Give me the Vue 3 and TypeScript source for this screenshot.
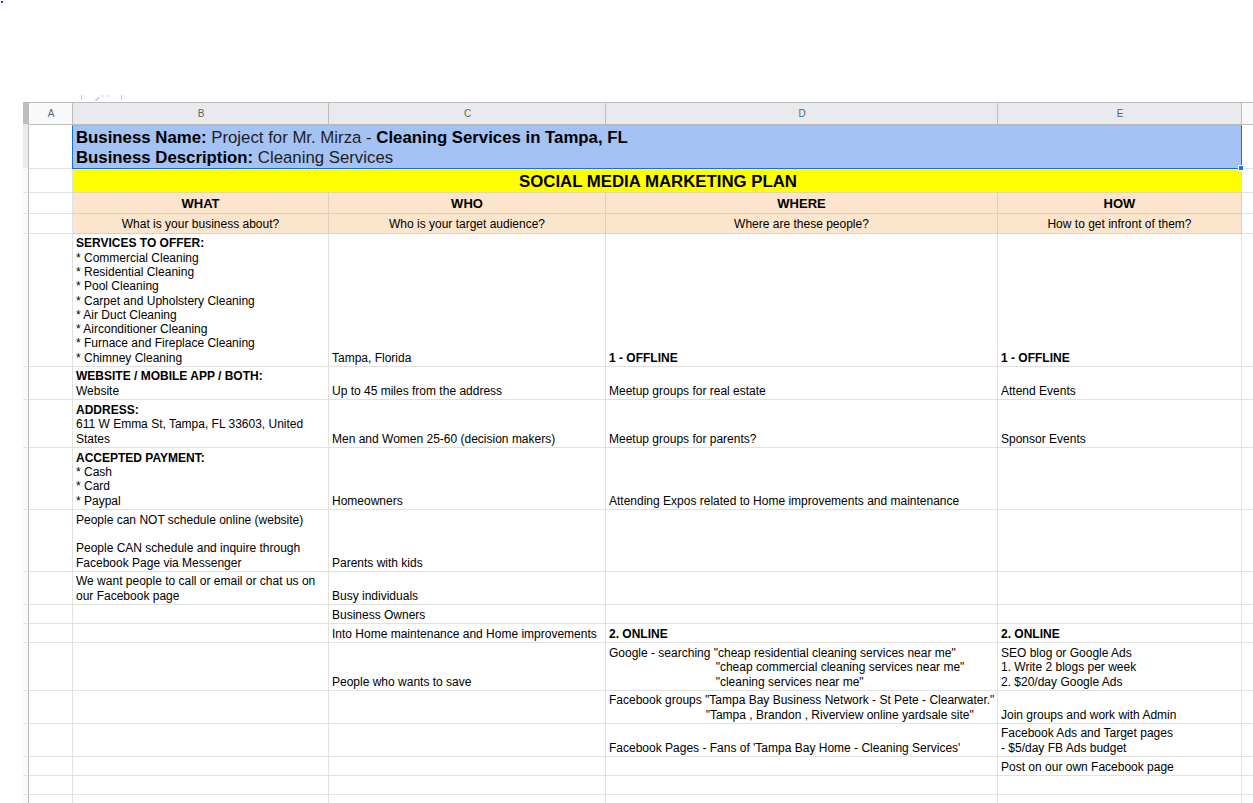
<template>
  <div class="page">
    <i class="dot"></i>
    <div class="toolbar-scrap">
      <i class="tick"></i>
      <svg class="scrap-icon" width="16" height="6" viewBox="0 0 16 6">
        <path d="M1 5 L3 5 L5 2" fill="none" stroke="#b5b5b5" stroke-width="1.2" />
        <path d="M7 1 H10 M12 1 H15" stroke="#d0d0d0" stroke-width="1" />
      </svg>
      <i class="tick tick-right"></i>
    </div>

    <div class="sheet">
      <div class="row head-row">
        <div class="gutter gutter-dark"></div>
        <div v-for="c in columns" :key="c" class="col-head">{{ c }}</div>
        <div class="col-head rest"></div>
      </div>

      <div class="row" style="height: 43px">
        <div class="gutter gutter-sel"></div>
        <div class="cell"></div>
        <div class="cell merged title">
          <div><b>Business Name:</b> Project for Mr. Mirza - <b>Cleaning Services in Tampa, FL</b></div>
          <div><b>Business Description:</b> Cleaning Services</div>
          <i class="handle"></i>
        </div>
        <div class="cell rest"></div>
      </div>

      <div class="row" style="height: 25px">
        <div class="gutter"></div>
        <div class="cell"></div>
        <div class="cell merged banner">SOCIAL MEDIA MARKETING PLAN</div>
        <div class="cell rest"></div>
      </div>

      <div class="row" style="height: 21px">
        <div class="gutter"></div>
        <div class="cell"></div>
        <div v-for="h in headings" :key="h.title" class="cell peach heading">{{ h.title }}</div>
        <div class="cell rest"></div>
      </div>

      <div class="row" style="height: 20px">
        <div class="gutter"></div>
        <div class="cell"></div>
        <div v-for="h in headings" :key="h.sub" class="cell peach sub">{{ h.sub }}</div>
        <div class="cell rest"></div>
      </div>

      <div v-for="(r, i) in rows" :key="i" class="row" :style="{ height: r.h + 'px' }">
        <div class="gutter"></div>
        <div class="cell"></div>
        <div v-for="(c, j) in r.cells" :key="j" class="cell body" :class="{ strong: c.strong }">
          <div v-if="c.head" class="cell-head">{{ c.head }}</div>{{ c.text }}
        </div>
        <div class="cell rest"></div>
      </div>
    </div>
  </div>
</template>

<script setup lang="ts">
type Cell = { head?: string; text?: string; strong?: boolean };

const columns = ["A", "B", "C", "D", "E"];

const headings = [
  { title: "WHAT", sub: "What is your business about?" },
  { title: "WHO", sub: "Who is your target audience?" },
  { title: "WHERE", sub: "Where are these people?" },
  { title: "HOW", sub: "How to get infront of them?" },
];

const rows: { h: number; cells: Cell[] }[] = [
  {
    h: 133,
    cells: [
      {
        head: "SERVICES TO OFFER:",
        text: "* Commercial Cleaning\n* Residential Cleaning\n* Pool Cleaning\n* Carpet and Upholstery Cleaning\n* Air Duct Cleaning\n* Airconditioner Cleaning\n* Furnace and Fireplace Cleaning\n* Chimney Cleaning",
      },
      { text: "Tampa, Florida" },
      { text: "1 - OFFLINE", strong: true },
      { text: "1 - OFFLINE", strong: true },
    ],
  },
  {
    h: 33,
    cells: [
      { head: "WEBSITE / MOBILE APP / BOTH:", text: "Website" },
      { text: "Up to 45 miles from the address" },
      { text: "Meetup groups for real estate" },
      { text: "Attend Events" },
    ],
  },
  {
    h: 48,
    cells: [
      { head: "ADDRESS:", text: "611 W Emma St, Tampa, FL 33603, United States" },
      { text: "Men and Women 25-60 (decision makers)" },
      { text: "Meetup groups for parents?" },
      { text: "Sponsor Events" },
    ],
  },
  {
    h: 62,
    cells: [
      { head: "ACCEPTED PAYMENT:", text: "* Cash\n* Card\n* Paypal" },
      { text: "Homeowners" },
      { text: "Attending Expos related to Home improvements and maintenance" },
      {},
    ],
  },
  {
    h: 62,
    cells: [
      {
        text: "People can NOT schedule online (website)\n\nPeople CAN schedule and inquire through Facebook Page via Messenger",
      },
      { text: "Parents with kids" },
      {},
      {},
    ],
  },
  {
    h: 33,
    cells: [
      { text: "We want people to call or email or chat us on our Facebook page" },
      { text: "Busy individuals" },
      {},
      {},
    ],
  },
  { h: 19, cells: [{}, { text: "Business Owners" }, {}, {}] },
  {
    h: 19,
    cells: [
      {},
      { text: "Into Home maintenance and Home improvements" },
      { text: "2. ONLINE", strong: true },
      { text: "2. ONLINE", strong: true },
    ],
  },
  {
    h: 48,
    cells: [
      {},
      { text: "People who wants to save" },
      {
        text:
          'Google - searching "cheap residential cleaning services near me"\n' +
          " ".repeat(32) +
          '"cheap commercial cleaning services near me"\n' +
          " ".repeat(32) +
          '"cleaning services near me"',
      },
      { text: "SEO blog or Google Ads\n1. Write 2 blogs per week\n2. $20/day Google Ads" },
    ],
  },
  {
    h: 33,
    cells: [
      {},
      {},
      {
        text:
          'Facebook groups "Tampa Bay Business Network - St Pete - Clearwater."\n' +
          " ".repeat(29) +
          '"Tampa , Brandon , Riverview online yardsale site"',
      },
      { text: "Join groups and work with Admin" },
    ],
  },
  {
    h: 33,
    cells: [
      {},
      {},
      { text: "Facebook Pages - Fans of 'Tampa Bay Home - Cleaning Services'" },
      { text: "Facebook Ads and Target pages\n- $5/day FB Ads budget" },
    ],
  },
  { h: 19, cells: [{}, {}, {}, { text: "Post on our own Facebook page" }] },
  { h: 19, cells: [{}, {}, {}, {}] },
  { h: 19, cells: [{}, {}, {}, {}] },
];
</script>

<style scoped>
.page {
  position: relative;
  width: 1253px;
  height: 803px;
  overflow: hidden;
  background: #fff;
  font-family: "Liberation Sans", Arial, sans-serif;
  color: #000;
  padding-top: 95px;
  box-sizing: border-box;
}
.dot {
  position: absolute;
  left: 1px;
  top: 1px;
  width: 2px;
  height: 2px;
  background: #3a3ad0;
}
.toolbar-scrap {
  height: 7px;
  margin-left: 81px;
  width: 41px;
  display: flex;
  justify-content: space-between;
  align-items: flex-start;
}
.tick {
  width: 1px;
  height: 5px;
  background: #c4c4c4;
}
.sheet {
  margin-left: 23px;
}
.row {
  display: grid;
  grid-template-columns: 6px 44px 256px 277px 392px 244px 12px;
  box-sizing: border-box;
}
.head-row {
  height: 23px;
  border-top: 1px solid #bdbdbd;
}
.gutter {
  background: #f8f9fa;
  border-right: 1px solid #bdbdbd;
  border-bottom: 1px solid #e2e3e3;
  box-sizing: border-box;
}
.gutter-dark {
  background: #bdbdbd;
}
.gutter-sel {
  background: #e8eaed;
}
.col-head {
  background: #e8eaed;
  border-right: 1px solid #bdbdbd;
  border-bottom: 1px solid #bdbdbd;
  box-sizing: border-box;
  display: flex;
  align-items: center;
  justify-content: center;
  padding-left: 1px;
  font-size: 10px;
  color: #5f6368;
}
.col-head:nth-child(2) {
  background: #f8f9fa;
}
.col-head.rest {
  background: #f8f9fa;
  border-right: none;
}
.cell {
  position: relative;
  box-sizing: border-box;
  border-right: 1px solid #e1e1e1;
  border-bottom: 1px solid #e1e1e1;
  overflow: hidden;
}
.cell.rest {
  border-right: none;
}
.merged {
  grid-column: span 4;
}
.title {
  background: #a4c2f4;
  font-size: 16.8px;
  line-height: 20px;
  padding: 2px 3px 0;
  color: #1f1f1f;
  border: 1px solid #1a6fd8;
  border-top-color: #a9b8d0;
  overflow: visible;
  margin-left: -1px;
  z-index: 1;
}
.title b {
  color: #000;
}
.handle {
  position: absolute;
  right: -3px;
  bottom: -3px;
  width: 6px;
  height: 6px;
  box-sizing: border-box;
  background: #1a73e8;
  border: 1px solid #fff;
}
.banner {
  background: #ffff00;
  font-size: 16.8px;
  font-weight: 700;
  line-height: 24px;
  padding: 2px 0 0 2px;
  text-align: center;
  border-right-color: #e0e0a0;
  border-bottom-color: #e0d9a8;
}
.peach {
  background: #fce5cd;
  border-right-color: #e2cdb6;
  border-bottom-color: #e2cdb6;
  text-align: center;
}
.heading {
  font-size: 13px;
  font-weight: 700;
  line-height: 21px;
}
.sub {
  font-size: 12px;
  line-height: 20px;
}
.body {
  font-size: 12px;
  line-height: 14.3px;
  padding: 0 1px 1px 3px;
  white-space: pre-wrap;
  display: flex;
  flex-direction: column;
  justify-content: flex-end;
}
.cell-head {
  font-weight: 700;
}
.strong {
  font-weight: 700;
}
</style>
